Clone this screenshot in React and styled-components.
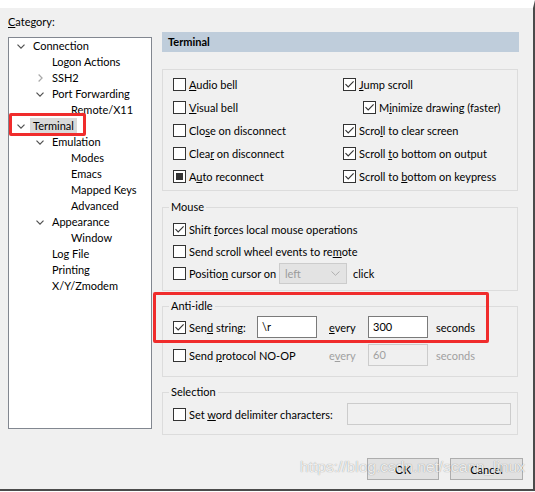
import React from "react";
import styled, { createGlobalStyle } from "styled-components";

const GlobalStyle = createGlobalStyle`
  html, body {
    margin: 0;
    padding: 0;
    background: #ffffff;
  }
  body {
    font-family: Lato, "Liberation Sans", sans-serif;
    font-size: 11px;
    color: #000000;
  }
`;

const Dialog = styled.div`
  position: relative;
  box-sizing: border-box;
  width: 535px;
  height: 491px;
  background: #f0f0f0;
  border-top: 8px solid #ffffff;
  border-right: 2px solid #4b4b4b;
  border-bottom: 2px solid #4b4b4b;
`;

const Body = styled.div`
  display: flex;
  gap: 10px;
  padding: 0 8px;
`;

const LeftCol = styled.div`
  width: 144px;
  display: flex;
  flex-direction: column;
`;

const RightCol = styled.div`
  width: 357px;
  display: flex;
  flex-direction: column;
`;

const CategoryLabel = styled.div`
  margin-top: 6px;
  line-height: 16px;
`;

const Tree = styled.div`
  margin-top: 7px;
  height: 392px;
  box-sizing: border-box;
  border: 1px solid #828790;
  background: #ffffff;
`;

const TreeRow = styled.div`
  position: relative;
  display: flex;
  align-items: center;
  height: 16px;
  padding-left: ${(p) => 8 + p.level * 19}px;
`;

const ChevronSlot = styled.span`
  width: 8px;
  height: 16px;
  margin-right: 5px;
  display: flex;
  align-items: center;
  justify-content: center;
`;

const TreeLabel = styled.span`
  padding: 0 3px;
  line-height: 16px;
  background: ${(p) => (p.selected ? "#d9d9d9" : "transparent")};
  white-space: nowrap;
`;

const RedMark = styled.div`
  position: absolute;
  box-sizing: border-box;
  border: 3px solid #f02c2c;
  border-radius: 2px;
  pointer-events: none;
`;

const Header = styled.div`
  margin-top: 24px;
  height: 20px;
  line-height: 20px;
  padding-left: 6px;
  background: #bfcddb;
  font-weight: bold;
`;

const OptionGrid = styled.div`
  margin: 17px 1px 0 0;
  border: 1px solid #dcdcdc;
  padding: 3px 0 2px 10px;
  display: grid;
  grid-template-columns: 170px 1fr;
  grid-auto-rows: 23px;
`;

const Group = styled.fieldset`
  margin: ${(p) => p.gap || 0}px 1px 0 0;
  padding: ${(p) => p.pt}px 10px ${(p) => p.pb}px 10px;
  border: 1px solid #dcdcdc;
  min-width: 0;
`;

const Legend = styled.legend`
  padding: 0 2px;
  margin-left: -4px;
  line-height: 16px;
`;

const Row = styled.div`
  display: flex;
  align-items: center;
  height: 22px;
  white-space: nowrap;
  padding-left: ${(p) => p.indent || 0}px;
`;

const LabelBlock = styled.div`
  display: flex;
  align-items: center;
  width: ${(p) => p.w}px;
  flex: none;
`;

const Box = styled.span`
  box-sizing: border-box;
  width: 13px;
  height: 13px;
  flex: none;
  border: 1px solid #333333;
  background: #ffffff;
  margin-right: 3px;
  display: flex;
  align-items: center;
  justify-content: center;
`;

const MixedMark = styled.span`
  width: 7px;
  height: 7px;
  background: #333333;
`;

const Key = styled.span`
  text-decoration: underline;
  text-underline-offset: 1px;
`;

const AnnotatedGroup = styled.div`
  position: relative;
  margin-top: 7px;
`;

const IdleGrid = styled.div`
  display: grid;
  grid-template-columns: 84px 60px 51px 60px auto;
  grid-auto-rows: 22px;
  row-gap: 6px;
  align-items: center;
`;

const Cell = styled.div`
  display: flex;
  align-items: center;
  white-space: nowrap;
  grid-column: ${(p) => p.span || "auto"};
  padding-left: ${(p) => p.pl || 0}px;
  color: ${(p) => (p.muted ? "#a0a0a0" : "#000000")};
`;

const TextBox = styled.div`
  box-sizing: border-box;
  width: ${(p) => p.w}px;
  height: 22px;
  line-height: 20px;
  padding-left: 4px;
  flex: none;
  border: 1px solid ${(p) => (p.disabled ? "#cccccc" : "#7a7a7a")};
  background: ${(p) => (p.disabled ? "#f0f0f0" : "#ffffff")};
  color: ${(p) => (p.disabled ? "#a0a0a0" : "#000000")};
`;

const Select = styled.div`
  box-sizing: border-box;
  width: 68px;
  height: 21px;
  margin-right: 6px;
  padding: 0 6px 0 5px;
  display: flex;
  align-items: center;
  justify-content: space-between;
  border: 1px solid #cccccc;
  background: #e3e3e3;
  color: #9b9b9b;
`;

const Footer = styled.div`
  display: flex;
  justify-content: flex-end;
  gap: 11px;
  margin-top: 23px;
  padding-right: 10px;
`;

const Button = styled.button`
  box-sizing: border-box;
  width: ${(p) => p.w}px;
  height: 22px;
  padding: 0;
  border: 1px solid #adadad;
  background: #e1e1e1;
  font-family: inherit;
  font-size: 11px;
  color: #000000;
`;

const Watermark = styled.div`
  position: absolute;
  right: 8px;
  top: 450px;
  font-family: "Liberation Sans", Arial, sans-serif;
  font-size: 15.5px;
  color: rgba(255, 255, 255, 0.85);
  text-shadow: 0 0 1px rgba(0, 0, 0, 0.45);
  pointer-events: none;
  white-space: nowrap;
`;

const ChevronDown = () => (
  <svg width="8" height="5" viewBox="0 0 8 5">
    <path d="M0.5 0.6 L4 4.1 L7.5 0.6" fill="none" stroke="#505050" strokeWidth="1.2" />
  </svg>
);

const ChevronRight = () => (
  <svg width="5" height="8" viewBox="0 0 5 8">
    <path d="M0.6 0.5 L4.1 4 L0.6 7.5" fill="none" stroke="#a8a8a8" strokeWidth="1.2" />
  </svg>
);

const Check = ({ state }) => (
  <Box>
    {state === "checked" && (
      <svg width="11" height="11" viewBox="0 0 11 11">
        <path d="M1.5 5.2 L4.2 8 L9.6 2.3" fill="none" stroke="#333333" strokeWidth="1.1" />
      </svg>
    )}
    {state === "mixed" && <MixedMark />}
  </Box>
);

// label text with the access key letter underlined
const Label = ({ text, k }) => {
  if (k == null) return <span>{text}</span>;
  return (
    <span>
      {text.slice(0, k)}
      <Key>{text[k]}</Key>
      {text.slice(k + 1)}
    </span>
  );
};

const tree = [
  { level: 0, text: "Connection", chevron: "down" },
  { level: 1, text: "Logon Actions" },
  { level: 1, text: "SSH2", chevron: "right" },
  { level: 1, text: "Port Forwarding", chevron: "down" },
  { level: 2, text: "Remote/X11" },
  { level: 0, text: "Terminal", chevron: "down", selected: true },
  { level: 1, text: "Emulation", chevron: "down" },
  { level: 2, text: "Modes" },
  { level: 2, text: "Emacs" },
  { level: 2, text: "Mapped Keys" },
  { level: 2, text: "Advanced" },
  { level: 1, text: "Appearance", chevron: "down" },
  { level: 2, text: "Window" },
  { level: 1, text: "Log File" },
  { level: 1, text: "Printing" },
  { level: 1, text: "X/Y/Zmodem" },
];

const terminalOptions = [
  { text: "Audio bell", k: 0 },
  { text: "Jump scroll", k: 0, state: "checked" },
  { text: "Visual bell", k: 0 },
  { text: "Minimize drawing (faster)", k: 1, state: "checked", indent: 20 },
  { text: "Close on disconnect", k: 3 },
  { text: "Scroll to clear screen", k: 4, state: "checked" },
  { text: "Clear on disconnect", k: 4 },
  { text: "Scroll to bottom on output", k: 7, state: "checked" },
  { text: "Auto reconnect", k: 1, state: "mixed" },
  { text: "Scroll to bottom on keypress", k: 10, state: "checked" },
];

const App = () => {
  return (
    <>
      <GlobalStyle />
      <Dialog>
        <Body>
          <LeftCol>
            <CategoryLabel>
              <Label text="Category:" k={0} />
            </CategoryLabel>
            <Tree>
              {tree.map((item) => (
                <TreeRow key={item.text} level={item.level}>
                  <ChevronSlot>
                    {item.chevron === "down" && <ChevronDown />}
                    {item.chevron === "right" && <ChevronRight />}
                  </ChevronSlot>
                  <TreeLabel selected={item.selected}>{item.text}</TreeLabel>
                  {item.selected && (
                    <RedMark style={{ left: 0, top: -5, width: 77, height: 23 }} />
                  )}
                </TreeRow>
              ))}
            </Tree>
          </LeftCol>

          <RightCol>
            <Header>Terminal</Header>

            <OptionGrid>
              {terminalOptions.map((o) => (
                <Row key={o.text} indent={o.indent}>
                  <Check state={o.state} />
                  <Label text={o.text} k={o.k} />
                </Row>
              ))}
            </OptionGrid>

            <Group gap={8} pt={3} pb={6}>
              <Legend>Mouse</Legend>
              <Row>
                <Check state="checked" />
                <Label text="Shift forces local mouse operations" k={6} />
              </Row>
              <Row>
                <Check />
                <Label text="Send scroll wheel events to remote" k={30} />
              </Row>
              <Row>
                <LabelBlock w={106}>
                  <Check />
                  <Label text="Position cursor on" k={7} />
                </LabelBlock>
                <Select>
                  <span>left</span>
                  <svg width="9" height="5" viewBox="0 0 9 5">
                    <path d="M0.5 0.5 L4.5 4.3 L8.5 0.5" fill="none" stroke="#b0b0b0" strokeWidth="1" />
                  </svg>
                </Select>
                <span>click</span>
              </Row>
            </Group>

            <AnnotatedGroup>
              <Group pt={2} pb={10}>
                <Legend>Anti-idle</Legend>
                <IdleGrid>
                  <Cell>
                    <Check state="checked" />
                    <Label text="Send string:" k={3} />
                  </Cell>
                  <TextBox w={60}>\r</TextBox>
                  <Cell pl={12}>
                    <Label text="every" k={0} />
                  </Cell>
                  <TextBox w={60}>300</TextBox>
                  <Cell pl={8}>seconds</Cell>

                  <Cell span="span 2">
                    <Check />
                    <Label text="Send protocol NO-OP" k={5} />
                  </Cell>
                  <Cell pl={12} muted>
                    <Label text="every" k={1} />
                  </Cell>
                  <TextBox w={60} disabled>60</TextBox>
                  <Cell pl={8} muted>seconds</Cell>
                </IdleGrid>
              </Group>
              <RedMark style={{ left: -9, top: -6, width: 336, height: 51 }} />
            </AnnotatedGroup>

            <Group gap={7} pt={3} pb={9}>
              <Legend>Selection</Legend>
              <Row>
                <LabelBlock w={174}>
                  <Check />
                  <Label text="Set word delimiter characters:" k={4} />
                </LabelBlock>
                <TextBox w={164} disabled />
              </Row>
            </Group>
          </RightCol>
        </Body>

        <Footer>
          <Button w={72}>OK</Button>
          <Button w={73}>Cancel</Button>
        </Footer>

        <Watermark>https://blog.csdn.net/scann_linux</Watermark>
      </Dialog>
    </>
  );
};

export default App;
